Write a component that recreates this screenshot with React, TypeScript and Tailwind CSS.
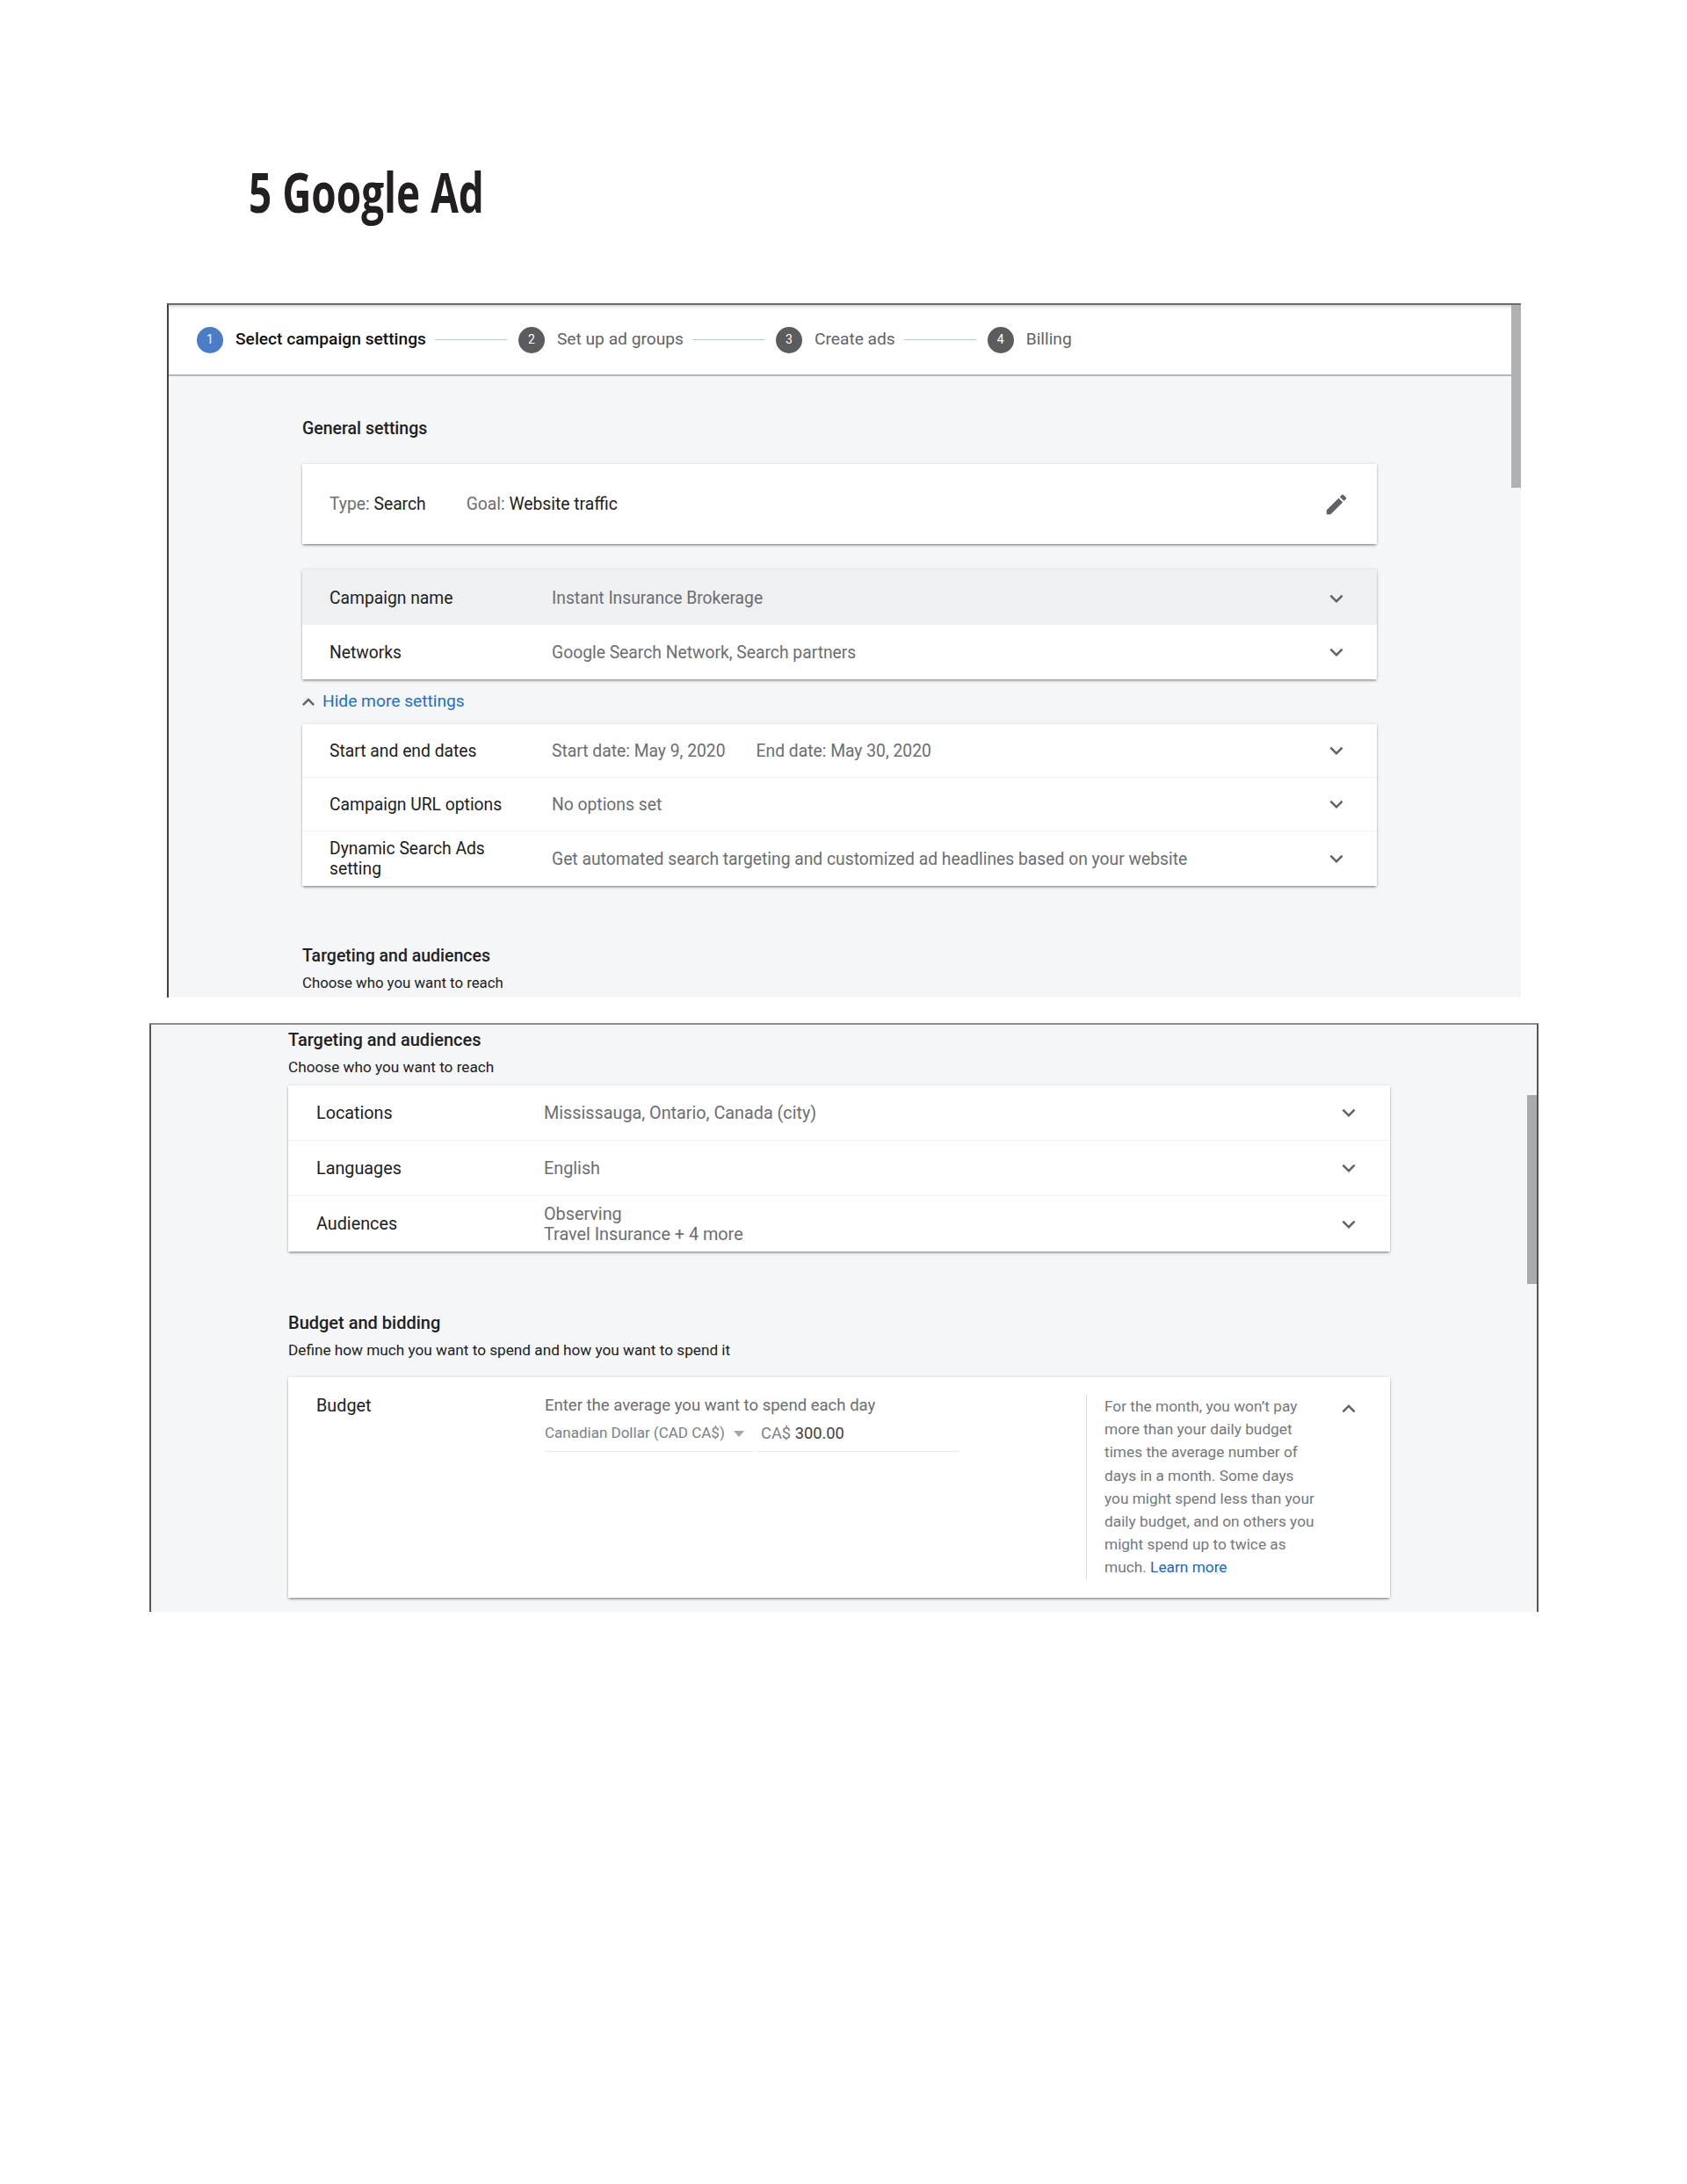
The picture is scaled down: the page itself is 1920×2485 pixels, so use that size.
import React from "react";

const ChevronDown = ({ up = false, size = 30 }: { up?: boolean; size?: number }) => (
  <svg
    viewBox="0 0 24 24"
    width={size}
    height={size}
    fill="#5f6368"
    className={up ? "shrink-0 rotate-180" : "shrink-0"}
  >
    <path d="M7.41 8.59 12 13.17l4.59-4.58L18 10l-6 6-6-6z" />
  </svg>
);

const Step = ({ n, label, active = false, last = false }: { n: number; label: string; active?: boolean; last?: boolean }) => (
  <div className="flex items-center">
    <span
      className={`flex h-[30px] w-[30px] items-center justify-center rounded-full text-[14px] text-white ${
        active ? "bg-[#4a7cc7]" : "bg-[#5a5c5e]"
      }`}
    >
      {n}
    </span>
    <span className={`ml-[14px] text-[19.2px] ${active ? "font-medium text-[#111]" : "text-[#5f6368]"}`}>{label}</span>
    {!last && <span className="mr-[13px] ml-[10px] h-px w-[82px] bg-[#b4c7d4]" />}
  </div>
);

const Row = ({
  label,
  children,
  hover = false,
  height = "h-[61px]",
  labelCol = "w-[253px]",
  pad = "pl-[31px] pr-[31px]",
  text = "text-[19.3px]",
  divider = true,
}: {
  label: React.ReactNode;
  children: React.ReactNode;
  hover?: boolean;
  height?: string;
  labelCol?: string;
  pad?: string;
  text?: string;
  divider?: boolean;
}) => (
  <div
    className={`flex items-center ${height} ${pad} ${text} ${hover ? "bg-[#eff0f2] pt-[2px]" : ""} ${
      divider ? "border-b border-[#f1f3f4]" : ""
    }`}
  >
    <div className={`${labelCol} shrink-0 leading-[23px] text-[#202124]`}>{label}</div>
    <div className="flex-1 leading-[23px] text-[#6b6e72]">{children}</div>
    <ChevronDown />
  </div>
);

const Card = ({ className = "", children }: { className?: string; children: React.ReactNode }) => (
  <div className={`bg-white shadow-[0_2px_3px_-1px_rgba(60,64,67,0.7),0_0_3px_rgba(60,64,67,0.15)] ${className}`}>{children}</div>
);

const SectionTitle = ({ title, sub, big = false }: { title: string; sub: string; big?: boolean }) => (
  <div>
    <div className={`${big ? "text-[20px]" : "text-[19.5px]"} leading-[23px] font-medium text-[#202124]`}>{title}</div>
    <div className={`mt-[8px] ${big ? "text-[17.2px]" : "text-[16.8px]"} leading-[22px] text-[#202124]`}>{sub}</div>
  </div>
);

export default function App() {
  return (
    <div className="min-h-[2485px] bg-white font-[family-name:Roboto,sans-serif]">
      <div className="h-[345px] pt-[173px] pl-[283px]">
        <h1 className="origin-left scale-x-[0.74] font-[family-name:'Open_Sans',sans-serif] text-[62px] leading-[90px] font-bold text-[#231f20]">
          5 Google Ad
        </h1>
      </div>

      {/* first screenshot */}
      <div className="ml-[190px] flex h-[790px] w-[1541px] border-t-2 border-l-2 border-t-[#6b6e70] border-l-[#3c4043] bg-[#f4f6f8]">
        <div className="min-w-0 flex-1">
          <div className="flex h-[81px] items-center border-b-2 border-[#b5b7b9] bg-white pl-[32px] shadow-[inset_0_4px_4px_-3px_rgba(0,0,0,0.25)]">
            <Step n={1} label="Select campaign settings" active />
            <Step n={2} label="Set up ad groups" />
            <Step n={3} label="Create ads" />
            <Step n={4} label="Billing" last />
          </div>

          <div className="pl-[152px]">
            <div className="pt-[48px] text-[19.5px] leading-[23px] font-medium text-[#202124]">General settings</div>

            <Card className="mt-[29px] flex h-[91px] w-[1223px] items-center pt-[1px] pr-[31px] pl-[31px] text-[19.3px]">
              <span className="text-[#6b6e72]">
                Type: <span className="text-[#202124]">Search</span>
              </span>
              <span className="ml-[46px] flex-1 text-[#6b6e72]">
                Goal: <span className="text-[#202124]">Website traffic</span>
              </span>
              <svg viewBox="0 0 24 24" width={30} height={30} fill="#5f6368">
                <path d="M3 17.25V21h3.75L17.81 9.94l-3.75-3.75L3 17.25zM20.71 7.04c.39-.39.39-1.02 0-1.41l-2.34-2.34c-.39-.39-1.02-.39-1.41 0l-1.83 1.83 3.75 3.75 1.83-1.83z" />
              </svg>
            </Card>

            <Card className="mt-[29px] w-[1223px]">
              <Row label="Campaign name" hover height="h-[63px]" divider={false}>
                Instant Insurance Brokerage
              </Row>
              <Row label="Networks" height="h-[62px]" divider={false}>
                Google Search Network, Search partners
              </Row>
            </Card>

            <div className="mt-[14px] flex h-[23px] items-center text-[19.2px] text-[#1a6fd0]">
              <span className="mr-[2px] -ml-[7px]">
                <ChevronDown up size={28} />
              </span>
              Hide more settings
            </div>

            <Card className="mt-[14px] w-[1223px]">
              <Row label="Start and end dates">
                <span>Start date: May 9, 2020</span>
                <span className="ml-[35px]">End date: May 30, 2020</span>
              </Row>
              <Row label="Campaign URL options">No options set</Row>
              <Row
                label={
                  <>
                    Dynamic Search Ads
                    <br />
                    setting
                  </>
                }
                height="h-[62px]"
                divider={false}
              >
                Get automated search targeting and customized ad headlines based on your website
              </Row>
            </Card>

            <div className="mt-[68px]">
              <SectionTitle title="Targeting and audiences" sub="Choose who you want to reach" />
            </div>
          </div>
        </div>
        <div className="w-[11px] shrink-0">
          <div className="h-[208px] bg-[#b0b1b3]" />
        </div>
      </div>

      {/* second screenshot */}
      <div className="mt-[29px] ml-[170px] flex h-[670px] w-[1581px] border-x-2 border-t-2 border-x-[#5c5558] border-t-[#8c8e90] bg-[#f4f6f8]">
        <div className="min-w-0 flex-1 pt-[6px] pl-[156px]">
          <SectionTitle big title="Targeting and audiences" sub="Choose who you want to reach" />

          <Card className="mt-[10px] w-[1254px]">
            <Row label="Locations" height="h-[63px]" labelCol="w-[259px]" pad="pl-[32px] pr-[32px]" text="text-[19.8px]">
              Mississauga, Ontario, Canada (city)
            </Row>
            <Row label="Languages" height="h-[63px]" labelCol="w-[259px]" pad="pl-[32px] pr-[32px]" text="text-[19.8px]">
              English
            </Row>
            <Row label="Audiences" height="h-[63px]" labelCol="w-[259px]" pad="pl-[32px] pr-[32px]" text="text-[19.8px]" divider={false}>
              Observing
              <br />
              Travel Insurance + 4 more
            </Row>
          </Card>

          <div className="mt-[70px]">
            <SectionTitle big title="Budget and bidding" sub="Define how much you want to spend and how you want to spend it" />
          </div>

          <Card className="mt-[20px] flex h-[251px] w-[1254px] pr-[32px] pl-[32px]">
            <div className="w-[260px] shrink-0 pt-[21px] text-[19.8px] leading-[23px] text-[#202124]">Budget</div>
            <div className="w-[616px] shrink-0 pt-[21px]">
              <div className="text-[18.55px] leading-[23px] text-[#6b6e72]">Enter the average you want to spend each day</div>
              <div className="mt-[8px] flex w-[472px]">
                <div className="flex h-[33px] w-[237px] items-start border-b border-[#e4ebf0] text-[17px] leading-[23px] text-[#7b7f83]">
                  Canadian Dollar (CAD CA$)
                  <span className="mt-[9px] ml-[10px] h-0 w-0 border-x-[6px] border-t-[7px] border-x-transparent border-t-[#a4a7aa]" />
                </div>
                <div className="ml-[4px] h-[33px] w-[231px] border-b border-[#e4ebf0] pl-[5px] text-[18.3px] leading-[23px] text-[#7b7f83]">
                  CA$ <span className="text-[#3c4043]">300.00</span>
                </div>
              </div>
            </div>
            <div className="mt-[20px] h-[210px] w-px shrink-0 bg-[#dadce0]" />
            <div className="ml-[20px] w-[245px] shrink-0 pt-[20px] text-[17.3px] leading-[26.2px] text-[#75787c]">
              For the month, you won’t pay more than your daily budget times the average number of days in a month. Some days you might spend less than your daily budget, and on others you might spend up to twice as much.{" "}
              <span className="text-[#1a66c9]">Learn more</span>
            </div>
            <div className="ml-auto pt-[21px]">
              <ChevronDown up />
            </div>
          </Card>
        </div>
        <div className="w-[11px] shrink-0 pt-[80px]">
          <div className="h-[215px] bg-[#a9aaac]" />
        </div>
      </div>
    </div>
  );
}
